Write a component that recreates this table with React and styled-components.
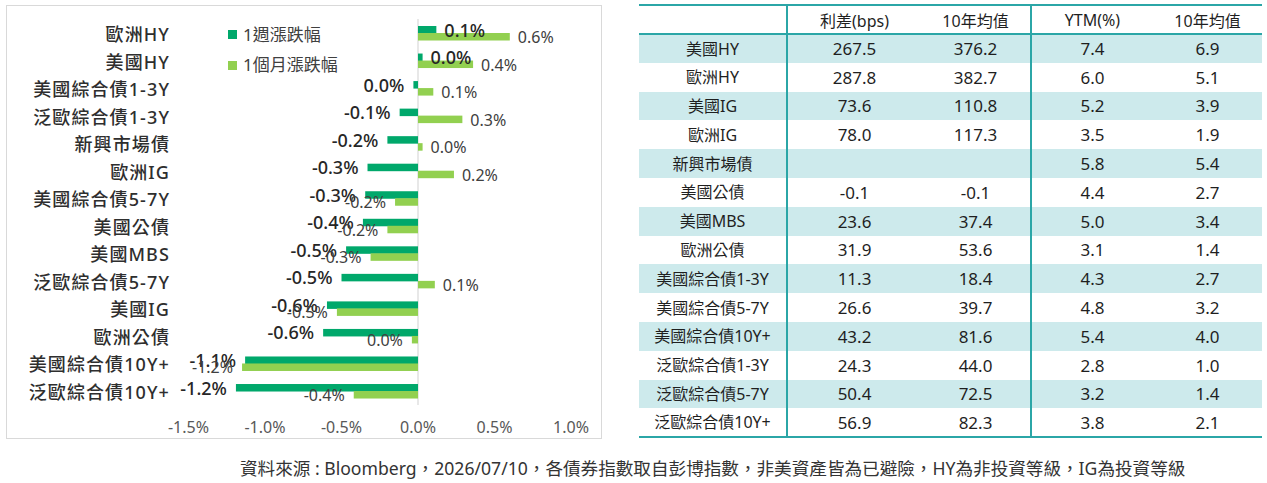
import React from "react";
import styled, { createGlobalStyle } from "styled-components";

const FONT = `"Noto Sans", "Noto Sans CJK TC", sans-serif`;
const DARK = "#00a86b";
const LIGHT = "#92d050";

// 0% 在 x=418，1% = 153px
const ZERO = 418;
const SCALE = 153;
const TOP = 33;
const PITCH = 27.54;

const chartData = [
  ["歐洲HY", 0.12, "0.1%", 0.6, "0.6%"],
  ["美國HY", 0.03, "0.0%", 0.36, "0.4%"],
  ["美國綜合債1-3Y", -0.03, "0.0%", 0.1, "0.1%"],
  ["泛歐綜合債1-3Y", -0.12, "-0.1%", 0.29, "0.3%"],
  ["新興市場債", -0.2, "-0.2%", 0.03, "0.0%"],
  ["歐洲IG", -0.33, "-0.3%", 0.235, "0.2%"],
  ["美國綜合債5-7Y", -0.345, "-0.3%", -0.15, "-0.2%"],
  ["美國公債", -0.36, "-0.4%", -0.2, "-0.2%"],
  ["美國MBS", -0.47, "-0.5%", -0.31, "-0.3%"],
  ["泛歐綜合債5-7Y", -0.5, "-0.5%", 0.11, "0.1%"],
  ["美國IG", -0.595, "-0.6%", -0.53, "-0.5%"],
  ["歐洲公債", -0.62, "-0.6%", -0.04, "0.0%"],
  ["美國綜合債10Y+", -1.13, "-1.1%", -1.15, "-1.2%"],
  ["泛歐綜合債10Y+", -1.19, "-1.2%", -0.42, "-0.4%"],
];

const ticks = [-1.5, -1.0, -0.5, 0, 0.5, 1.0];

const tableRows = [
  ["美國HY", "267.5", "376.2", "7.4", "6.9"],
  ["歐洲HY", "287.8", "382.7", "6.0", "5.1"],
  ["美國IG", "73.6", "110.8", "5.2", "3.9"],
  ["歐洲IG", "78.0", "117.3", "3.5", "1.9"],
  ["新興市場債", "", "", "5.8", "5.4"],
  ["美國公債", "-0.1", "-0.1", "4.4", "2.7"],
  ["美國MBS", "23.6", "37.4", "5.0", "3.4"],
  ["歐洲公債", "31.9", "53.6", "3.1", "1.4"],
  ["美國綜合債1-3Y", "11.3", "18.4", "4.3", "2.7"],
  ["美國綜合債5-7Y", "26.6", "39.7", "4.8", "3.2"],
  ["美國綜合債10Y+", "43.2", "81.6", "5.4", "4.0"],
  ["泛歐綜合債1-3Y", "24.3", "44.0", "2.8", "1.0"],
  ["泛歐綜合債5-7Y", "50.4", "72.5", "3.2", "1.4"],
  ["泛歐綜合債10Y+", "56.9", "82.3", "3.8", "2.1"],
];

const GlobalStyle = createGlobalStyle`
  body {
    margin: 0;
    background: #fff;
    font-family: ${FONT};
  }
`;

const Page = styled.div`
  width: 1267px;
  height: 483px;
  display: flex;
  flex-direction: column;
`;

const TopRow = styled.div`
  display: flex;
  align-items: flex-start;
  gap: 37px;
  padding: 4px 0 0 6px;
`;

const ChartPanel = styled.div`
  box-sizing: border-box;
  width: 596px;
  height: 434px;
  margin-top: 1px;
  border: 1px solid #d9d9d9;
  svg {
    display: block;
  }
`;

const Table = styled.table`
  border-collapse: collapse;
  table-layout: fixed;
  width: 623px;
  border-top: 2px solid #2ba6a7;
  border-bottom: 2px solid #2ba6a7;
  color: #1f1f1f;
`;

const HeadCell = styled.th`
  height: 27px;
  padding: 0;
  font-weight: 400;
  font-size: 16px;
  text-align: center;
  border-bottom: 2px solid #2ba6a7;
  border-right: ${(p) => (p.$divider ? "2px solid #2ba6a7" : "none")};
`;

const Row = styled.tr`
  height: 28.8px;
  background: ${(p) => (p.$shade ? "#cdeaec" : "#fff")};
`;

const Cell = styled.td`
  padding: 0;
  text-align: center;
  font-size: ${(p) => (p.$label ? "16px" : "17px")};
  line-height: 1;
  border-right: ${(p) => (p.$divider ? "2px solid #2ba6a7" : "none")};
`;

const Footer = styled.div`
  margin-top: 17px;
  padding-left: 240px;
  font-size: 17.6px;
  line-height: 24px;
  color: #333;
`;

function BarChart() {
  const x = (v) => ZERO + v * SCALE;
  return (
    <ChartPanel>
      <svg width="594" height="432" viewBox="7 6 594 432" fontFamily={FONT}>
        <line x1={ZERO} y1={19} x2={ZERO} y2={405} stroke="#d9d9d9" strokeWidth="1.2" />

        <rect x="228" y="30" width="9" height="9" fill={DARK} />
        <text x="243" y="34" fontSize="17" fill="#404040" dominantBaseline="central">
          1週漲跌幅
        </text>
        <rect x="228" y="61" width="9" height="9" fill={LIGHT} />
        <text x="243" y="64" fontSize="17" fill="#404040" dominantBaseline="central">
          1個月漲跌幅
        </text>

        {chartData.map(([name, wk, wkLabel, mo, moLabel], i) => {
          const c = TOP + PITCH * i;
          const wx = x(wk);
          const mx = x(mo);
          return (
            <g key={name}>
              <text
                x="170"
                y={c + 1}
                fontSize="18"
                fontWeight="500"
                fill="#2e2e2e"
                textAnchor="end"
                dominantBaseline="central"
                letterSpacing="1.1"
              >
                {name}
              </text>
              <rect x={Math.min(wx, ZERO)} y={c - 7} width={Math.abs(wx - ZERO)} height="7.5" fill={DARK} />
              <rect x={Math.min(mx, ZERO)} y={c} width={Math.abs(mx - ZERO)} height="7.5" fill={LIGHT} />
              <text
                x={wk >= 0 ? wx + 8 : wx - 9}
                y={c - 3.5}
                fontSize="18"
                fontWeight="500"
                fill="#262626"
                textAnchor={wk >= 0 ? "start" : "end"}
                dominantBaseline="central"
              >
                {wkLabel}
              </text>
              <text
                x={mo >= 0 ? mx + 8 : mx - 9}
                y={c + 4}
                fontSize="16"
                fill="#404040"
                textAnchor={mo >= 0 ? "start" : "end"}
                dominantBaseline="central"
              >
                {moLabel}
              </text>
            </g>
          );
        })}

        {ticks.map((t) => (
          <text
            key={t}
            x={x(t)}
            y="427"
            fontSize="16"
            fill="#595959"
            textAnchor="middle"
            dominantBaseline="central"
          >
            {t.toFixed(1)}%
          </text>
        ))}
      </svg>
    </ChartPanel>
  );
}

function SpreadTable() {
  return (
    <Table>
      <colgroup>
        <col style={{ width: 148 }} />
        <col style={{ width: 134 }} />
        <col style={{ width: 110 }} />
        <col style={{ width: 122 }} />
        <col style={{ width: 109 }} />
      </colgroup>
      <thead>
        <tr>
          <HeadCell $divider></HeadCell>
          <HeadCell>利差(bps)</HeadCell>
          <HeadCell $divider>10年均值</HeadCell>
          <HeadCell>YTM(%)</HeadCell>
          <HeadCell>10年均值</HeadCell>
        </tr>
      </thead>
      <tbody>
        {tableRows.map((r, i) => (
          <Row key={r[0]} $shade={i % 2 === 0}>
            <Cell $label $divider>
              {r[0]}
            </Cell>
            <Cell>{r[1]}</Cell>
            <Cell $divider>{r[2]}</Cell>
            <Cell>{r[3]}</Cell>
            <Cell>{r[4]}</Cell>
          </Row>
        ))}
      </tbody>
    </Table>
  );
}

export default function App() {
  return (
    <>
      <GlobalStyle />
      <Page>
        <TopRow>
          <BarChart />
          <SpreadTable />
        </TopRow>
        <Footer>
          資料來源 : Bloomberg，2026/07/10，各債券指數取自彭博指數，非美資產皆為已避險，HY為非投資等級，IG為投資等級
        </Footer>
      </Page>
    </>
  );
}
